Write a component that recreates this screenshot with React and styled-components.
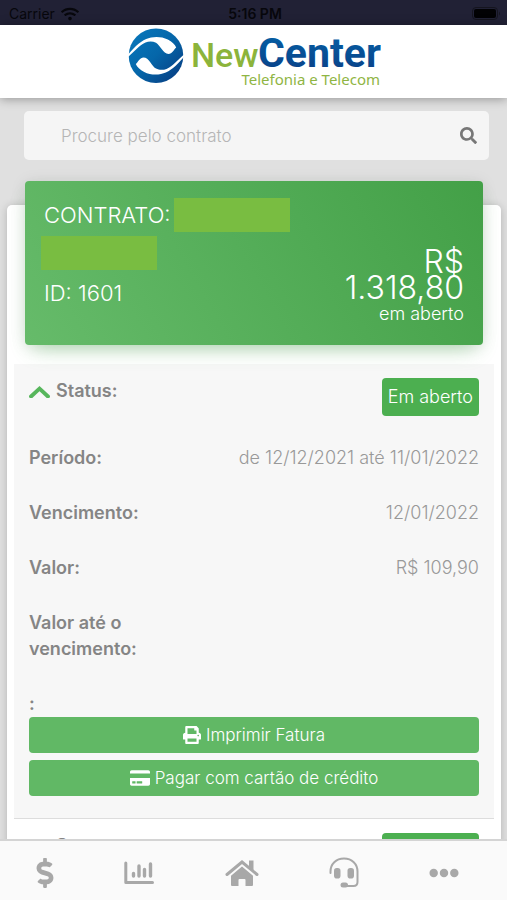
import styled, { createGlobalStyle } from 'styled-components'
import { FaCreditCard, FaDollarSign, FaEllipsisH, FaPrint, FaSearch, FaWifi } from 'react-icons/fa'

const details = [
  { label: 'Período:', value: 'de 12/12/2021 até 11/01/2022' },
  { label: 'Vencimento:', value: '12/01/2022' },
  { label: 'Valor:', value: 'R$ 109,90' },
  { label: 'Valor até o vencimento:', value: '' },
  { label: ':', value: '' },
]

export default function App() {
  return (
    <Screen>
      <GlobalStyle />
      <StatusBar>
        <Carrier>
          Carrier <FaWifi size={18} />
        </Carrier>
        <Clock>5:16 PM</Clock>
        <Battery />
      </StatusBar>
      <Header>
        <Logo />
      </Header>
      <Main>
        <SearchBox>
          <SearchInput type="search" aria-label="Procure pelo contrato" placeholder="Procure pelo contrato" />
          <SearchButton aria-label="Procurar">
            <FaSearch size={17} />
          </SearchButton>
        </SearchBox>
        <Card>
          <ContractHeader>
            <ContractInfo>
              <ContractName>
                CONTRATO: <Redacted $gap={3} />
              </ContractName>
              <Redacted $gap={-3} />
              <ContractId>ID: 1601</ContractId>
            </ContractInfo>
            <Balance>
              <Amount>
                R$
                <br />
                1.318,80
              </Amount>
              em aberto
            </Balance>
          </ContractHeader>
          <Invoice $open>
            <InvoiceSummary open />
            <Details>
              {details.map((item) => (
                <DetailRow key={item.label}>
                  <DetailLabel>{item.label}</DetailLabel>
                  <DetailValue>{item.value}</DetailValue>
                </DetailRow>
              ))}
            </Details>
            <Actions>
              <ActionButton>
                <FaPrint size={18} /> Imprimir Fatura
              </ActionButton>
              <ActionButton>
                <FaCreditCard size={20} /> Pagar com cartão de crédito
              </ActionButton>
            </Actions>
          </Invoice>
          <Invoice>
            <InvoiceSummary />
          </Invoice>
        </Card>
      </Main>
      <TabBar>
        <Tab href="#financeiro" aria-label="Financeiro">
          <DollarIcon />
        </Tab>
        <Tab href="#consumo" aria-label="Consumo">
          <ChartIcon />
        </Tab>
        <Tab href="#inicio" aria-label="Início">
          <HomeIcon />
        </Tab>
        <Tab href="#suporte" aria-label="Suporte">
          <HeadsetIcon />
        </Tab>
        <Tab href="#mais" aria-label="Mais">
          <FaEllipsisH size={30} />
        </Tab>
      </TabBar>
    </Screen>
  )
}

function InvoiceSummary({ open }) {
  return (
    <Summary>
      <Toggle aria-expanded={Boolean(open)}>
        <Chevron width="21" height="14" viewBox="0 0 21 14" $open={open}>
          <path d="M2 12.500 10.500 4.500 19 12.500" fill="none" stroke="#57b65c" strokeWidth="3.8" strokeLinecap="round" />
        </Chevron>
        Status:
      </Toggle>
      <Badge>Em aberto</Badge>
    </Summary>
  )
}

function Battery() {
  return (
    <svg width="29" height="14" viewBox="0 0 29 14">
      <rect x="0.5" y="0.5" width="25" height="12" rx="3.5" fill="none" stroke="#15151f" />
      <rect x="2" y="2" width="22" height="9" rx="2" fill="#020204" />
      <path d="M27 4.500q2 2 0 4z" fill="#15151f" />
    </svg>
  )
}

function Logo() {
  const swirl =
    'M1 26.500C6 21 12 14 19.200 11C25 8.400 34 8 40.800 11.500C45 13.600 48 16.500 49.200 19.500C47 21.500 45 26 41.500 26C36 26 33.500 17.500 29 14.800C25.500 13 21.500 13.400 18.500 14.500C12 17.500 7 24 1 29Z'

  return (
    <svg width="254" height="62" viewBox="0 0 254 62" role="img" aria-label="NewCenter Telefonia e Telecom">
      <defs>
        <linearGradient id="mark" x1="0" y1="0" x2="1" y2="1">
          <stop offset="0" stopColor="#0879bd" />
          <stop offset="0.5" stopColor="#0566a9" />
          <stop offset="1" stopColor="#08377c" />
        </linearGradient>
        <linearGradient id="word" x1="0" y1="0" x2="0" y2="1">
          <stop offset="0" stopColor="#0563a8" />
          <stop offset="1" stopColor="#0a3d84" />
        </linearGradient>
      </defs>
      <circle cx="29" cy="27.700" r="27.300" fill="url(#mark)" />
      <path d={swirl} fill="#fff" />
      <path d={swirl} fill="#fff" transform="rotate(180 29 27.700)" />
      <g fontFamily="Roboto, sans-serif">
        <text x="64" y="39" fontSize="34" fontWeight="500" fill="#8cb43b">
          New
        </text>
        <text x="131" y="39" fontSize="41" fontWeight="700" fill="url(#word)">
          Center
        </text>
      </g>
      <text x="253" y="57" textAnchor="end" fontFamily="'Noto Sans', sans-serif" fontSize="15" fontWeight="400" fill="#8fb544">
        Telefonia e Telecom
      </text>
    </svg>
  )
}

function ChartIcon() {
  return (
    <svg width="30" height="24" viewBox="0 0 30 24" fill="none" stroke="currentColor" strokeLinecap="round">
      <path d="M1.800 2V21.500H28.500" strokeWidth="3" strokeLinejoin="round" />
      <path d="M9.500 12.500V15M15 5V15M20.500 8.500V15M26.500 3V15" strokeWidth="3.400" />
    </svg>
  )
}

function HomeIcon() {
  return (
    <svg width="34" height="28" viewBox="0 0 34 28" fill="currentColor">
      <path d="M2 15.500 17 3 32 15.500" fill="none" stroke="currentColor" strokeWidth="3" strokeLinecap="round" />
      <path d="M24 1.500h4.500v11L24 8.800z" />
      <path d="M17 7.500 28 16.700V26q0 1-1 1h-6.500v-6q0-1-1-1h-5q-1 0-1 1v6H7q-1 0-1-1v-9.300z" />
    </svg>
  )
}

function HeadsetIcon() {
  return (
    <svg width="30" height="31" viewBox="0 0 30 31" fill="currentColor">
      <path
        d="M1.500 16V14.500C1.500 7 7 1.500 15 1.500S28.500 7 28.500 14.500V25q0 4-4 4H15"
        fill="none"
        stroke="currentColor"
        strokeWidth="2"
        strokeLinecap="round"
      />
      <rect x="5" y="11" width="6.500" height="10.500" rx="2.800" />
      <rect x="18.500" y="11" width="6.500" height="10.500" rx="2.800" />
      <rect x="11.500" y="25.500" width="7.500" height="5" rx="2.500" />
    </svg>
  )
}

const GlobalStyle = createGlobalStyle`
  * {
    box-sizing: border-box;
  }

  body {
    margin: 0;
    background: #e0e0e0;
    color: #858585;
    font: 300 18px/26px Inter, 'Liberation Sans', sans-serif;
  }

  button,
  input {
    border: 0;
    font: inherit;
  }
`

const Screen = styled.div`
  display: flex;
  flex-direction: column;
  height: 100vh;
`

const StatusBar = styled.div`
  display: grid;
  grid-template-columns: 1fr auto 1fr;
  align-items: center;
  height: 25px;
  padding: 2px 6px 0 9px;
  background: #212135;
  color: #07070c;
  font-size: 14px;
  line-height: 20px;

  > :last-child {
    justify-self: end;
  }
`

const Carrier = styled.span`
  display: flex;
  align-items: center;
  gap: 6px;
  font-weight: 400;
`

const Clock = styled.span`
  font-weight: 600;
`

const Header = styled.header`
  position: relative;
  z-index: 1;
  display: flex;
  justify-content: center;
  height: 73px;
  padding-top: 3px;
  background: #fff;
  box-shadow: 0 1px 10px rgba(0, 0, 0, 0.35);
`

const Main = styled.main`
  flex: 1;
  min-height: 0;
  overflow-y: auto;
  scrollbar-width: none;
  padding: 13px 6px 0 7px;
`

const SearchBox = styled.form`
  display: flex;
  align-items: center;
  height: 49px;
  margin: 0 12px 0 17px;
  border-radius: 5px;
  background: #f5f5f5;
`

const SearchInput = styled.input`
  flex: 1;
  min-width: 0;
  padding: 0 0 0 37px;
  background: none;
  color: #777;
  font-size: 17px;
  outline: none;

  &::placeholder {
    color: #b5b5b5;
    opacity: 1;
  }
`

const SearchButton = styled.button`
  display: flex;
  padding: 12px;
  background: none;
  color: #777;
`

const Card = styled.section`
  margin-top: 45px;
  padding: 0 7px;
  border-radius: 5px;
  background: #fff;
  box-shadow: 0 1px 8px rgba(0, 0, 0, 0.2);
`

const ContractHeader = styled.div`
  position: relative;
  top: -24px;
  display: flex;
  justify-content: space-between;
  align-items: flex-end;
  height: 164px;
  margin: 0 11px -5px;
  padding: 17px 19px 20px;
  border-radius: 4px;
  background: linear-gradient(60deg, #66bb6a, #43a047);
  box-shadow: 0 10px 20px -8px rgba(76, 175, 80, 0.45), 0 2px 16px rgba(0, 0, 0, 0.1);
  color: #fff;
`

const ContractInfo = styled.div`
  align-self: flex-start;
  font-size: 22px;
`

const ContractName = styled.div`
  display: flex;
  align-items: center;
  height: 34px;
  margin-bottom: 4px;
`

const Redacted = styled.div`
  width: 116px;
  height: 34px;
  margin-left: ${(p) => p.$gap}px;
  background: #79bd41;
`

const ContractId = styled.div`
  margin-top: 10px;
`

const Balance = styled.div`
  text-align: right;
  line-height: 22px;
`

const Amount = styled.div`
  margin-bottom: 2px;
  font-size: 32px;
  line-height: 26px;
`

const Invoice = styled.article`
  padding: 14px 15px 22px;
  border-bottom: 1px solid #ddd;
  background: ${(p) => (p.$open ? '#f7f7f7' : '#fff')};
`

const Summary = styled.div`
  display: flex;
  justify-content: space-between;
  align-items: flex-start;
`

const Toggle = styled.button`
  display: flex;
  align-items: center;
  gap: 6px;
  padding: 0;
  background: none;
  color: #858585;
  font-weight: 600;
`

const Chevron = styled.svg`
  transform: ${(p) => (p.$open ? 'none' : 'scaleY(-1)')};
  transform-origin: 50% 80%;
`

const Badge = styled.span`
  padding: 6px;
  border-radius: 4px;
  background: #4caf50;
  color: #fff;
`

const Details = styled.dl`
  display: flex;
  flex-direction: column;
  gap: 29px;
  margin: 29px 0 0;
`

const DetailRow = styled.div`
  display: flex;
  justify-content: space-between;
`

const DetailLabel = styled.dt`
  flex: 0 0 30%;
  font-weight: 600;
`

const DetailValue = styled.dd`
  margin: 0;
  color: #999;
`

const Actions = styled.div`
  display: flex;
  flex-direction: column;
  gap: 7px;
`

const ActionButton = styled.button`
  display: flex;
  justify-content: center;
  align-items: center;
  gap: 5px;
  height: 36px;
  border-radius: 4px;
  background: #61b865;
  color: #fff;
  font-size: 17px;
`

const TabBar = styled.nav`
  display: flex;
  justify-content: space-between;
  height: 61px;
  padding: 4px 48px 0 36px;
  border-top: 2px solid #d4d4d4;
  background: #fafafa;
`

const Tab = styled.a`
  display: flex;
  align-items: center;
  color: #a8a8a8;
`

const DollarIcon = styled(FaDollarSign)`
  width: 18px;
  height: 30px;
`
